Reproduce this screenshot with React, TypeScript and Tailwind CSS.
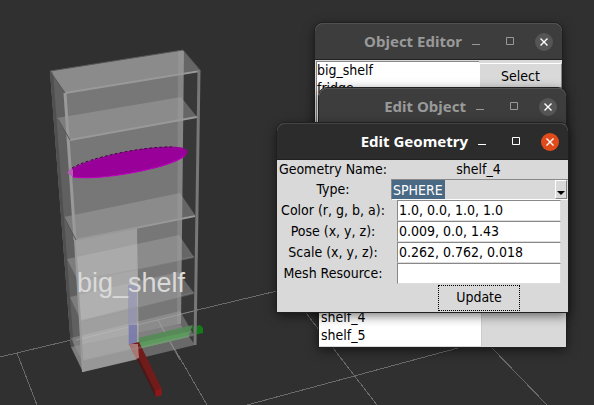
import React from "react";

const ui = "font-['DejaVu_Sans_Condensed','DejaVu_Sans',sans-serif] text-sm leading-[18px] text-black";

function Scene() {
  return (
    <svg className="absolute inset-0" width="594" height="405" viewBox="0 0 594 405" aria-hidden="true">
      <g stroke="#6a6a6a" strokeWidth="1" shapeRendering="crispEdges">
        <path d="M0 357L277 291M17 353L37 405M158 320L207 405M247 405L458 348M306 313L377 405M492 348L547 405" fill="none" />
      </g>
      <path d="M50 71L183 50L200 70L195 345L83 372L71 347Z" fill="#3e3e3e" fillOpacity=".6" />
      <path d="M50 71L183 50L180 324L71 347Z" fill="#777" />
      <path d="M50 71L65 93L83 372L71 347Z" fill="#606060" />
      <path d="M50 71L53 72L74 350L71 347Z" fill="#505050" />
      <path d="M178 50L184 50L181 324H177Z" fill="#858585" />
      <g fill="#a8a8a8" fillOpacity=".42">
        <path d="M50 71L183 50L200 70L65 93Z" />
        <path d="M57 118L181 97L197 117L70 140Z" />
        <path d="M64 217L180 193L195 215L76 240Z" />
        <path d="M67 259L179 235L194 257L78 281Z" />
        <path d="M70 297L178 272L194 293L81 321Z" />
        <path d="M71 338L180 311L194 335L82 361Z" />
      </g>
      <path d="M71 347L180 324L195 345L83 372Z" fill="#999" fillOpacity=".5" />
      <path d="M76 340L198 310M158 320L180 360" stroke="#aaa" strokeOpacity=".6" fill="none" />
      <path d="M138 338L193 325L188 337L139 349Z" fill="#528b53" fillOpacity=".9" />
      <path d="M138 343L191 331L188 337L139 349Z" fill="#5fa360" fillOpacity=".6" />
      <path d="M192 327L200 325L203 328V333L194 335Z" fill="#157a18" />
      <path d="M67 173C74 162 139 145 178 147C188 148 190 152 185 156C169 170 94 181 73 177Z" fill="#990099" />
      <path d="M72 168C88 158 143 146 174 147" stroke="#4a004a" strokeDasharray="3 2" fill="none" />
      <path d="M73 177C100 181 165 169 185 156" stroke="#c000c0" fill="none" />
      <path d="M75 240L137 227L139 359L83 372Z" fill="#d0d0d0" fillOpacity=".45" />
      <path d="M78 281L138 267V307L81 321Z" fill="#c4c4c4" fillOpacity=".25" />
      <path d="M128 285H137V345H128Z" fill="#9090b4" fillOpacity=".6" />
      <path d="M129 325H137V345H129Z" fill="#6d6daa" fillOpacity=".6" />
      <path d="M131 344L139 342L162 389L155 393Z" fill="#711b1b" />
      <path d="M129 344L155 396V391L132 344Z" fill="#481a1a" />
      <path d="M155 391L161 388L162 395L156 397Z" fill="#8d1719" />
      <path d="M129 344L138 344L139 358L136 359Z" fill="#b78783" fillOpacity=".85" />
      <g stroke="#999" strokeWidth="2" fill="none">
        <path d="M65 93L200 71M70 140L197 117M76 240L195 216" />
        <path d="M79 281L194 257M81 321L194 293M82 361L194 335" strokeOpacity=".35" />
        <path d="M65 93L75 240" strokeWidth="3" />
        <path d="M75 240L83 372" />
        <path d="M199 70L195 345" strokeWidth="3" stroke="#777" />
      </g>
      <path d="M67 173L71 168L73 170V177Z" fill="#b060ad" />
      <path d="M50 71L65 93M50 71L183 50L200 70M58 119L70 140M64 217L76 240" stroke="#555" fill="none" />
      <text x="77" y="292" fontSize="27" fill="#dadada" fontFamily="Liberation Sans, Arial, sans-serif">big_shelf</text>
    </svg>
  );
}

function TitleBar({ title, active = false }: { title: string; active?: boolean }) {
  const tone = active ? "border-[#444] bg-[#2c2c2c] text-white" : "border-[#505050] bg-[#3d3d3d] text-[#999]";
  return (
    <header className={`flex h-9 items-center justify-end rounded-t-lg border-t pr-[9px] ${tone}`}>
      <h2 className="mr-1 whitespace-nowrap pb-0.5 font-['Noto_Sans',sans-serif] text-[15px] font-bold">{title}</h2>
      <button aria-label="Minimize" className="flex h-5 w-5 items-center justify-center">
        <svg width="10" height="10"><path d="M1 7.500H9" stroke="currentColor" /></svg>
      </button>
      <button aria-label="Maximize" className="ml-3.5 flex h-5 w-5 items-center justify-center">
        <svg width="10" height="10"><path d="M1.500 0.500H8.500V7.500H1.500Z" fill="none" stroke="currentColor" /></svg>
      </button>
      <button aria-label="Close" className={`ml-[15px] flex h-[18px] w-[18px] items-center justify-center rounded-full text-white ${active ? "bg-[#e04b1b]" : "bg-[#555]"}`}>
        <svg width="10" height="10"><path d="M1.500 1.500L8.500 8.500M8.500 1.500L1.500 8.500" stroke="currentColor" strokeWidth="1.400" /></svg>
      </button>
    </header>
  );
}

const shell = "absolute rounded-t-lg bg-[#d9d9d9] shadow-[0_3px_12px_rgba(0,0,0,0.6)] outline outline-1 outline-[#202020]";

const fields = [
  { id: "color", label: "Color (r, g, b, a):", value: "1.0, 0.0, 1.0, 1.0" },
  { id: "pose", label: "Pose (x, y, z):", value: "0.009, 0.0, 1.43" },
  { id: "scale", label: "Scale (x, y, z):", value: "0.262, 0.762, 0.018" },
  { id: "mesh", label: "Mesh Resource:", value: "" },
];

export default function App() {
  return (
    <main className={`relative h-screen min-h-[405px] overflow-hidden bg-[#303030] ${ui}`}>
      <Scene />

      <section className={`${shell} left-[315px] top-[23px] w-[247px]`}>
        <TitleBar title="Object Editor" />
        <div className="flex h-[250px] border-t border-[#202020] pl-px pt-px">
          <ul className="w-[163px] border-l border-t border-[#888] bg-white leading-4">
            <li>big_shelf</li>
            <li className="pt-0.5">fridge</li>
          </ul>
          <button className="mt-0.5 h-[26px] flex-1 border border-white border-r-[#888] bg-[#d9d9d9]">Select</button>
        </div>
      </section>

      <section className={`${shell} left-[319px] top-[88px] w-[247px]`}>
        <TitleBar title="Edit Object" />
        <div className="h-[223px] pb-px">
          <ul className="flex h-full w-[163px] flex-col justify-end border-r border-[#ccc] bg-white pb-0.5 pl-0.5">
            <li>shelf_4</li>
            <li>shelf_5</li>
          </ul>
        </div>
      </section>

      <section className={`${shell} left-[277px] top-[123px] w-[291px]`}>
        <TitleBar title="Edit Geometry" active />
        <form className="grid grid-cols-[112px_1fr] border-t border-[#202020] pb-px text-center" onSubmit={(e) => e.preventDefault()}>
          <span className="h-[19px]">Geometry Name:</span>
          <output className="h-[19px]">shelf_4</output>
          <label htmlFor="type" className="leading-5">Type:</label>
          <div className="relative ml-0.5 h-[21px] border-b border-l border-t border-[#888] border-b-white">
            <select id="type" defaultValue="SPHERE" className="h-full w-full appearance-none bg-[linear-gradient(90deg,#4a6984_53px,#d9d9d9_53px)] pl-px text-white outline-none">
              <option>SPHERE</option>
            </select>
            <span className="pointer-events-none absolute inset-y-0 right-px flex w-3 items-end justify-center border border-white border-b-[#888] border-r-[#888] bg-[#d9d9d9] pb-0.5">
              <svg width="8" height="5"><path d="M0 0H8L4 4Z" fill="#000" /></svg>
            </span>
          </div>
          {fields.map((f) => (
            <React.Fragment key={f.id}>
              <label htmlFor={f.id} className="leading-5">{f.label}</label>
              <input id={f.id} defaultValue={f.value} className="ml-2 mr-[7px] h-[21px] min-w-0 border border-[#888] border-b-[#ddd] border-r-[#ddd] bg-white pb-px pl-px outline-none" />
            </React.Fragment>
          ))}
          <div className="col-start-2 flex justify-center pl-px">
            <button className="mt-px h-[26px] w-[82px] border border-dotted border-black bg-[#d9d9d9] pb-0.5">Update</button>
          </div>
        </form>
      </section>
    </main>
  );
}
